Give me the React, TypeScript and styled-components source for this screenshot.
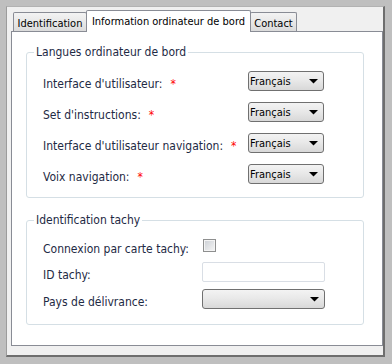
import styled, { createGlobalStyle } from 'styled-components';

const GlobalStyle = createGlobalStyle`
  html, body {
    margin: 0;
    padding: 0;
  }
  body {
    background: #bfbfbf;
    font-family: "DejaVu Sans Condensed", "DejaVu Sans", sans-serif;
    font-stretch: condensed;
  }
`;

const languageRows = [
  'Interface d\'utilisateur:',
  'Set d\'instructions:',
  'Interface d\'utilisateur navigation:',
  'Voix navigation:',
];

export default function App() {
  return (
    <>
      <GlobalStyle />
      <Window>
        <TabStrip>
          <Tab $w={74}>Identification</Tab>
          <Tab $w={165} $active>Information ordinateur de bord</Tab>
          <Tab $w={47}>Contact</Tab>
        </TabStrip>

        <Panel>
          <Group $pt={12} $pb={13}>
            <Legend>Langues ordinateur de bord</Legend>
            <FormGrid $cols="205px 76px" $rows="repeat(4, 20px)" $gap={11}>
              {languageRows.map((label) => (
                <Row key={label}>
                  <Label>
                    {label}
                    <Required>*</Required>
                  </Label>
                  <Dropdown $w={76}>
                    <span>Français</span>
                    <Arrow />
                  </Dropdown>
                </Row>
              ))}
            </FormGrid>
          </Group>

          <Group $pt={9} $pb={15} $top={15}>
            <Legend>Identification tachy</Legend>
            <FormGrid $cols="159px 123px" $rows="19px 20px 20px" $gap={7}>
              <Label>Connexion par carte tachy:</Label>
              <Checkbox />
              <Label>ID tachy:</Label>
              <TextInput type="text" />
              <Label>Pays de délivrance:</Label>
              <Dropdown $w={123}>
                <span></span>
                <Arrow />
              </Dropdown>
            </FormGrid>
          </Group>
        </Panel>
      </Window>
    </>
  );
}

function Arrow() {
  return (
    <svg width="9" height="5" viewBox="0 0 9 5">
      <polygon points="0,0 9,0 4.5,4.5" fill="#000" />
    </svg>
  );
}

const Window = styled.div`
  box-sizing: border-box;
  width: 379px;
  height: 351px;
  margin: 6px 0 0 6px;
  border-style: solid;
  border-width: 1px 2px 2px 1px;
  border-color: #b2b2b2 #6e6e6e #6e6e6e #9c9c9c;
  background: #f0f0f0;
  display: flex;
  flex-direction: column;
  padding: 3px 0 9px 4px;
`;

const TabStrip = styled.div`
  display: flex;
  align-items: flex-end;
  height: 22px;
  margin: 0 0 -1px 2px;
  position: relative;
  z-index: 1;
`;

const Tab = styled.div<{ $active?: boolean; $w: number }>`
  box-sizing: border-box;
  width: ${(p) => p.$w}px;
  height: ${(p) => (p.$active ? 22 : 19)}px;
  margin-bottom: ${(p) => (p.$active ? 0 : 1)}px;
  margin-left: -1px;
  padding-top: ${(p) => (p.$active ? 0 : 2)}px;
  border: 1px solid #898c95;
  border-bottom: none;
  border-radius: 2px 2px 0 0;
  background: ${(p) =>
    p.$active ? '#ffffff' : 'linear-gradient(#f3f3f3, #e8e8e8 50%, #dbdbdb)'};
  display: flex;
  align-items: center;
  justify-content: center;
  font-size: 11px;
  color: #000;
  white-space: nowrap;

  &:first-child {
    margin-left: 0;
  }
`;

const Panel = styled.div`
  flex: 1;
  box-sizing: border-box;
  width: 372px;
  border: 1px solid #898c95;
  background: #ffffff;
  padding: 13px 18px 0 14px;
`;

const Group = styled.fieldset<{ $pt: number; $pb: number; $top?: number }>`
  margin: ${(p) => p.$top ?? 0}px 0 0 0;
  min-width: 0;
  border: 1px solid #d5dfe5;
  border-radius: 3px;
  padding: ${(p) => p.$pt}px 16px ${(p) => p.$pb}px 16px;
`;

const Legend = styled.legend`
  margin-left: -9px;
  padding: 0 2px;
  font-size: 12px;
  line-height: 14px;
  color: #1e2a44;
`;

const FormGrid = styled.div<{ $cols: string; $rows: string; $gap: number }>`
  display: grid;
  grid-template-columns: ${(p) => p.$cols};
  grid-template-rows: ${(p) => p.$rows};
  row-gap: ${(p) => p.$gap}px;
  align-items: center;
`;

const Row = styled.div`
  display: contents;
`;

const Label = styled.span`
  margin-top: 6px;
  font-size: 12px;
  line-height: 14px;
  color: #1e2a44;
  white-space: nowrap;
`;

const Required = styled.span`
  margin-left: 8px;
  color: #ff0000;
`;

const Dropdown = styled.div<{ $w: number }>`
  box-sizing: border-box;
  width: ${(p) => p.$w}px;
  height: 20px;
  border: 1px solid #707070;
  border-radius: 3px;
  background: linear-gradient(#f3f3f3, #e9e9e9 45%, #d8d8d8);
  display: flex;
  align-items: center;
  justify-content: space-between;
  padding: 0 5px 0 1px;
  font-size: 11px;
  color: #000;
`;

const Checkbox = styled.span`
  box-sizing: border-box;
  width: 13px;
  height: 13px;
  margin-left: 1px;
  border: 1px solid #8e8f8f;
  background: linear-gradient(135deg, #cbcfd5 0%, #f6f6f6 100%);
  box-shadow: inset 0 0 0 1px #f4f4f4;
`;

const TextInput = styled.input`
  box-sizing: border-box;
  width: 123px;
  height: 20px;
  margin: 0;
  padding: 0 2px;
  border: 1px solid #d9dee5;
  border-radius: 2px;
  background: #fff;
  outline: none;
`;
